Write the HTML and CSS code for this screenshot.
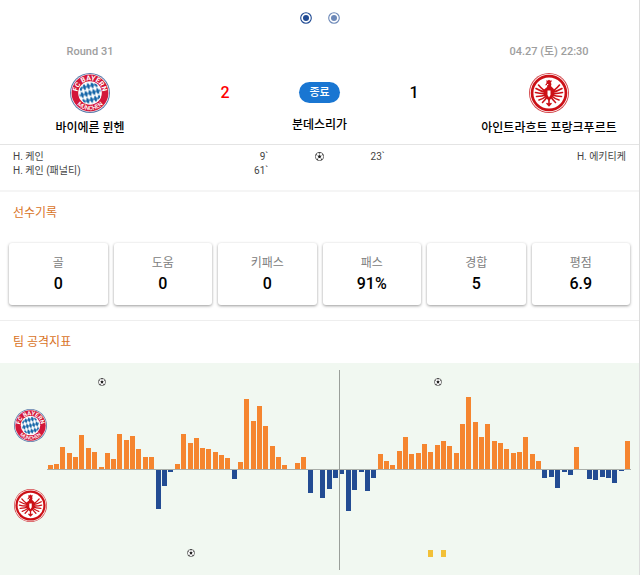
FILE: index.html
```html
<!DOCTYPE html>
<html lang="ko">
<head>
  <meta charset="utf-8">
  <meta name="viewport" content="width=device-width, initial-scale=1.0">
  <title>바이에른 뮌헨 2 : 1 아인트라흐트 프랑크푸르트</title>
  <link rel="stylesheet" href="styles.css">
</head>
<body>
  <!-- shared icons -->
  <svg class="defs" aria-hidden="true">
    <symbol id="frankfurt" viewBox="0 0 40 40">
      <circle cx="20" cy="20" r="20" fill="#d4474b" />
      <circle cx="20" cy="20" r="19.1" fill="#fff" />
      <circle cx="20" cy="20" r="18.3" fill="#cc1016" />
      <circle cx="20" cy="20" r="15.6" fill="#fff" />
      <g fill="none" stroke="#cc1016" stroke-width="1.6" stroke-linecap="round">
        <path d="M18 18.500Q14 17.500 9.500 12M18 19.500Q12 18.500 7 15.500M18 20.500Q12 21 6.500 19.500M18 21.500Q13 23.500 7.500 23.500M18 22.500Q14 26 10 27M18.500 23.500Q16 27 13.500 29.500" />
        <path d="M22 18.500Q26 17.500 30.500 12M22 19.500Q28 18.500 33 15.500M22 20.500Q28 21 33.500 19.500M22 21.500Q27 23.500 32.500 23.500M22 22.500Q26 26 30 27M21.500 23.500Q24 27 26.500 29.500" />
        <path d="M20 25v7.500M18 30.500l2 2 2-2" />
      </g>
      <path fill="#cc1016" d="M17.500 7l1 .8 1.500-1 1.500 1 1-.8v2l-.8.5c1 1.200.8 2.600.2 3.500l3 3-.5 7L20 28l-4.400-4.500-.5-7 3-2.500.2-2-2.300.3 1.500-2z" />
      <path fill="#fff" d="M18.500 17.500h3v4.500L20 24.500 18.500 22zM18 11h1.200v.9H18z" />
    </symbol>
    <symbol id="ball" viewBox="0 0 16 16">
      <circle cx="8" cy="8" r="7.2" fill="#fff" stroke="#333" stroke-width="1.2" />
      <path fill="#222" d="M8 5.200l2.800 2-1.100 3.300H6.300L5.200 7.200zM5.500 1.300L8 2.600l2.500-1.300L8 .5zM1 6l2-.5.300-2.700L1.500 5zM15 6l-2-.5-.3-2.700L14.500 5zM2.500 12l2.200.2.900 2.500-2-.9zM13.500 12l-2.200.2-.9 2.500 2-.9z" />
      <path fill="none" stroke="#444" stroke-width=".8" d="M8 2.600v2.600M3 5.500l2.200 1.700M13 5.500l-2.200 1.700M4.700 12.200l1.600-1.700M11.300 12.200l-1.600-1.700" />
    </symbol>
    <symbol id="dot" viewBox="0 0 12 12">
      <circle cx="6" cy="6" r="5.300" fill="none" stroke="currentColor" stroke-width="1.100" />
      <circle cx="6" cy="6" r="3" fill="currentColor" />
    </symbol>
  </svg>

  <main class="card">
    <nav class="pager">
      <button class="active" aria-label="1"><svg><use href="#dot" /></svg></button>
      <button aria-label="2"><svg><use href="#dot" /></svg></button>
    </nav>

    <section class="match">
      <div class="team">
        <span class="meta">Round 31</span>
        <svg class="crest" viewBox="0 0 40 40">
          <defs>
            <pattern id="lozenges" width="4" height="7" patternUnits="userSpaceOnUse" patternTransform="translate(20 20) rotate(-14)">
              <rect width="4" height="7" fill="#1465a8" />
              <path fill="#fff" d="M2 0l2 3.500L2 7 0 3.500z" />
            </pattern>
            <path id="arc-top" d="M7.500 20a12.500 12.500 0 0 1 25 0" />
            <path id="arc-bottom" d="M2.800 20a17.200 17.200 0 0 0 34.400 0" />
          </defs>
          <g id="bayern">
            <circle cx="20" cy="20" r="20" fill="#5d7cab" />
            <circle cx="20" cy="20" r="19" fill="#fff" />
            <circle cx="20" cy="20" r="18.400" fill="#d3173a" />
            <circle cx="20" cy="20" r="11.800" fill="#fff" />
            <circle cx="20" cy="20" r="10.800" fill="url(#lozenges)" />
            <text class="crest-text"><textPath href="#arc-top" startOffset="50%">FC BAYERN</textPath></text>
            <text class="crest-text lower"><textPath href="#arc-bottom" startOffset="50%">MÜNCHEN</textPath></text>
          </g>
        </svg>
        <span class="name">바이에른 뮌헨</span>
      </div>
      <div class="score winner">2</div>
      <div class="status">
        <span class="chip">종료</span>
        <span class="name">분데스리가</span>
      </div>
      <div class="score">1</div>
      <div class="team">
        <span class="meta">04.27 (토) 22:30</span>
        <svg class="crest"><use href="#frankfurt" /></svg>
        <span class="name">아인트라흐트 프랑크푸르트</span>
      </div>
    </section>

    <section class="goals">
      <ul>
        <li><span>H. 케인</span><span>9`</span></li>
        <li><span>H. 케인 (패널티)</span><span>61`</span></li>
      </ul>
      <svg class="ball"><use href="#ball" /></svg>
      <ul>
        <li><span>23`</span><span>H. 에키티케</span></li>
      </ul>
    </section>

    <section class="player">
      <h2>선수기록</h2>
      <dl class="stats">
        <div><dt>골</dt><dd>0</dd></div>
        <div><dt>도움</dt><dd>0</dd></div>
        <div><dt>키패스</dt><dd>0</dd></div>
        <div><dt>패스</dt><dd>91%</dd></div>
        <div><dt>경합</dt><dd>5</dd></div>
        <div><dt>평점</dt><dd>6.9</dd></div>
      </dl>
    </section>

    <section class="momentum">
      <h2>팀 공격지표</h2>
      <div class="chart">
        <div class="sides">
          <svg viewBox="0 0 40 40"><use href="#bayern" /></svg>
          <svg><use href="#frankfurt" /></svg>
        </div>
        <div class="plot" id="plot"></div>
      </div>
    </section>
  </main>

  <script>
    // one value per minute, home > 0 > away
    const values = [
      4, 5, 22, 16, 12, 34, 21, 17, 2, 16, 10, 35, 29, 33, 20, 12,
      12, -39, -16, -2, 5, 35, 26, 31, 21, 20, 17, 14, 11, -9, 7, 70,
      48, 63, 43, 23, 12, 4, 0, 6, 12, -23, 0, -28, -19, -8, -4, -41,
      -20, -2, -21, -8, 15, 8, 4, 18, 32, 15, 16, 25, 17, 24, 28, 23,
      16, 45, 72, 47, 32, 45, 28, 26, 20, 16, 17, 32, 15, 8, -8, -7,
      -18, -2, -5, 22, 0, -9, -10, -7, -8, -13, -1, 28];

    // index of the minute -> what happened
    const home = { 8: "goal", 61: "goal" };
    const away = { 22: "goal", 60: "yellow", 62: "yellow" };

    const icons = {
      goal: '<svg class="ball"><use href="#ball" /></svg>',
      yellow: '<i class="yellow"></i>' };

    const bar = (v) => v > 0 ? `<i class="bar" style="height: ${v}px"></i>` : "";

    document.getElementById("plot").innerHTML = values.map((v, i) => `
      <div class="minute">
        <div class="event">${icons[home[i]] || ""}</div>
        <div class="up">${bar(v)}</div>
        <div class="down">${bar(-v)}</div>
        <div class="event">${icons[away[i]] || ""}</div>
      </div>`).join("");
  </script>
</body>
</html>
```
FILE: styles.css
```css
* {
  margin: 0;
  padding: 0;
  box-sizing: border-box;
}

body {
  font-family: Roboto, "Noto Sans CJK KR", sans-serif;
  font-size: 12px;
  line-height: 16px;
  color: #000;
  background: #fff;
}

ul {
  list-style: none;
}

.defs {
  position: absolute;
  width: 0;
  height: 0;
}

.card {
  border-right: 1px solid #dcdcdc;
}

/* pager */
.pager {
  display: flex;
  justify-content: center;
  gap: 16px;
  padding: 12px 0 20px;
}

.pager button {
  width: 12px;
  height: 12px;
  border: none;
  background: none;
  color: #1f4a93;
  opacity: 0.65;
  cursor: pointer;
}

.pager .active {
  opacity: 1;
}

.pager svg {
  display: block;
  width: 12px;
  height: 12px;
}

/* match header */
.match {
  display: grid;
  grid-template-columns: 20fr 10fr 11fr 10fr 20fr;
  padding-bottom: 8px;
  border-bottom: 1px solid #e4e4e4;
}

.team,
.status {
  display: flex;
  flex-direction: column;
  align-items: center;
}

.meta {
  font-size: 11px;
  font-weight: 500;
  color: #9e9e9e;
}

.crest {
  width: 40px;
  height: 40px;
  margin: 13px 0 7px;
}

.crest-text {
  font: bold 7px Roboto, sans-serif;
  fill: #fff;
  text-anchor: middle;
}

.crest-text.lower {
  font-size: 6px;
  font-weight: 500;
}

.name {
  font-weight: 500;
  white-space: nowrap;
}

.score {
  align-self: center;
  padding-top: 5px;
  font-size: 16px;
  font-weight: 500;
  text-align: center;
}

.winner {
  color: #f00;
}

.status {
  justify-content: flex-end;
  gap: 14px;
  padding-bottom: 3px;
}

.chip {
  padding: 0 10px;
  border-radius: 11px;
  font-size: 11px;
  font-weight: 500;
  line-height: 21px;
  color: #fff;
  background: #1976d2;
}

/* goals */
.goals {
  display: grid;
  grid-template-columns: 5fr 2fr 5fr;
  justify-items: center;
  padding: 5px 13px 12px;
  border-bottom: 2px solid #f5f5f5;
  font-size: 10px;
  line-height: 14px;
  color: #444;
}

.goals ul {
  width: 100%;
}

.goals li {
  display: flex;
  justify-content: space-between;
}

.ball {
  width: 9px;
  height: 9px;
}

.goals .ball {
  margin-top: 2px;
}

/* sections */
h2 {
  padding: 13px;
  font-size: 12px;
  font-weight: 400;
  color: #d9731f;
}

.player {
  padding-bottom: 15px;
  border-bottom: 1px solid #eee;
}

.stats {
  display: grid;
  grid-template-columns: repeat(6, 1fr);
  gap: 6px;
  padding: 9px 9px 0;
}

.stats div {
  display: grid;
  gap: 2px;
  padding: 12px 0 10px;
  border-radius: 3px;
  text-align: center;
  box-shadow: 0 1px 3px rgba(0, 0, 0, 0.4);
}

.stats dt {
  color: #808080;
}

.stats dd {
  font-size: 16px;
  font-weight: 500;
  line-height: 22px;
}

/* momentum chart */
.chart {
  display: flex;
  padding: 7px 9px 5px 14px;
  background: #f1f8f1;
}

.sides {
  display: flex;
  flex-direction: column;
  gap: 47px;
  padding-top: 39px;
}

.sides svg {
  width: 33px;
  height: 33px;
}

.plot {
  position: relative;
  flex: 1;
  display: flex;
  padding-bottom: 5px;
}

/* half time */
.plot::after {
  content: "";
  position: absolute;
  top: 0;
  bottom: 0;
  left: 50%;
  width: 1px;
  background: #9a9f9a;
}

.minute {
  flex: 1;
  min-width: 0;
  display: grid;
  grid-template-rows: 23px 77px 71px 24px;
}

.event {
  display: flex;
  justify-content: center;
  align-items: center;
}

.event .ball,
.yellow {
  flex-shrink: 0;
}

.event .ball {
  width: 8px;
  height: 8px;
}

.yellow {
  width: 5px;
  height: 7px;
  background: #f2c037;
}

.up,
.down {
  display: flex;
  justify-content: center;
}

.up {
  align-items: flex-end;
  border-bottom: 1px solid #a9aea9;
}

.bar {
  width: 5px;
  background: #f5852f;
}

.down .bar {
  background: #234c93;
}
```
